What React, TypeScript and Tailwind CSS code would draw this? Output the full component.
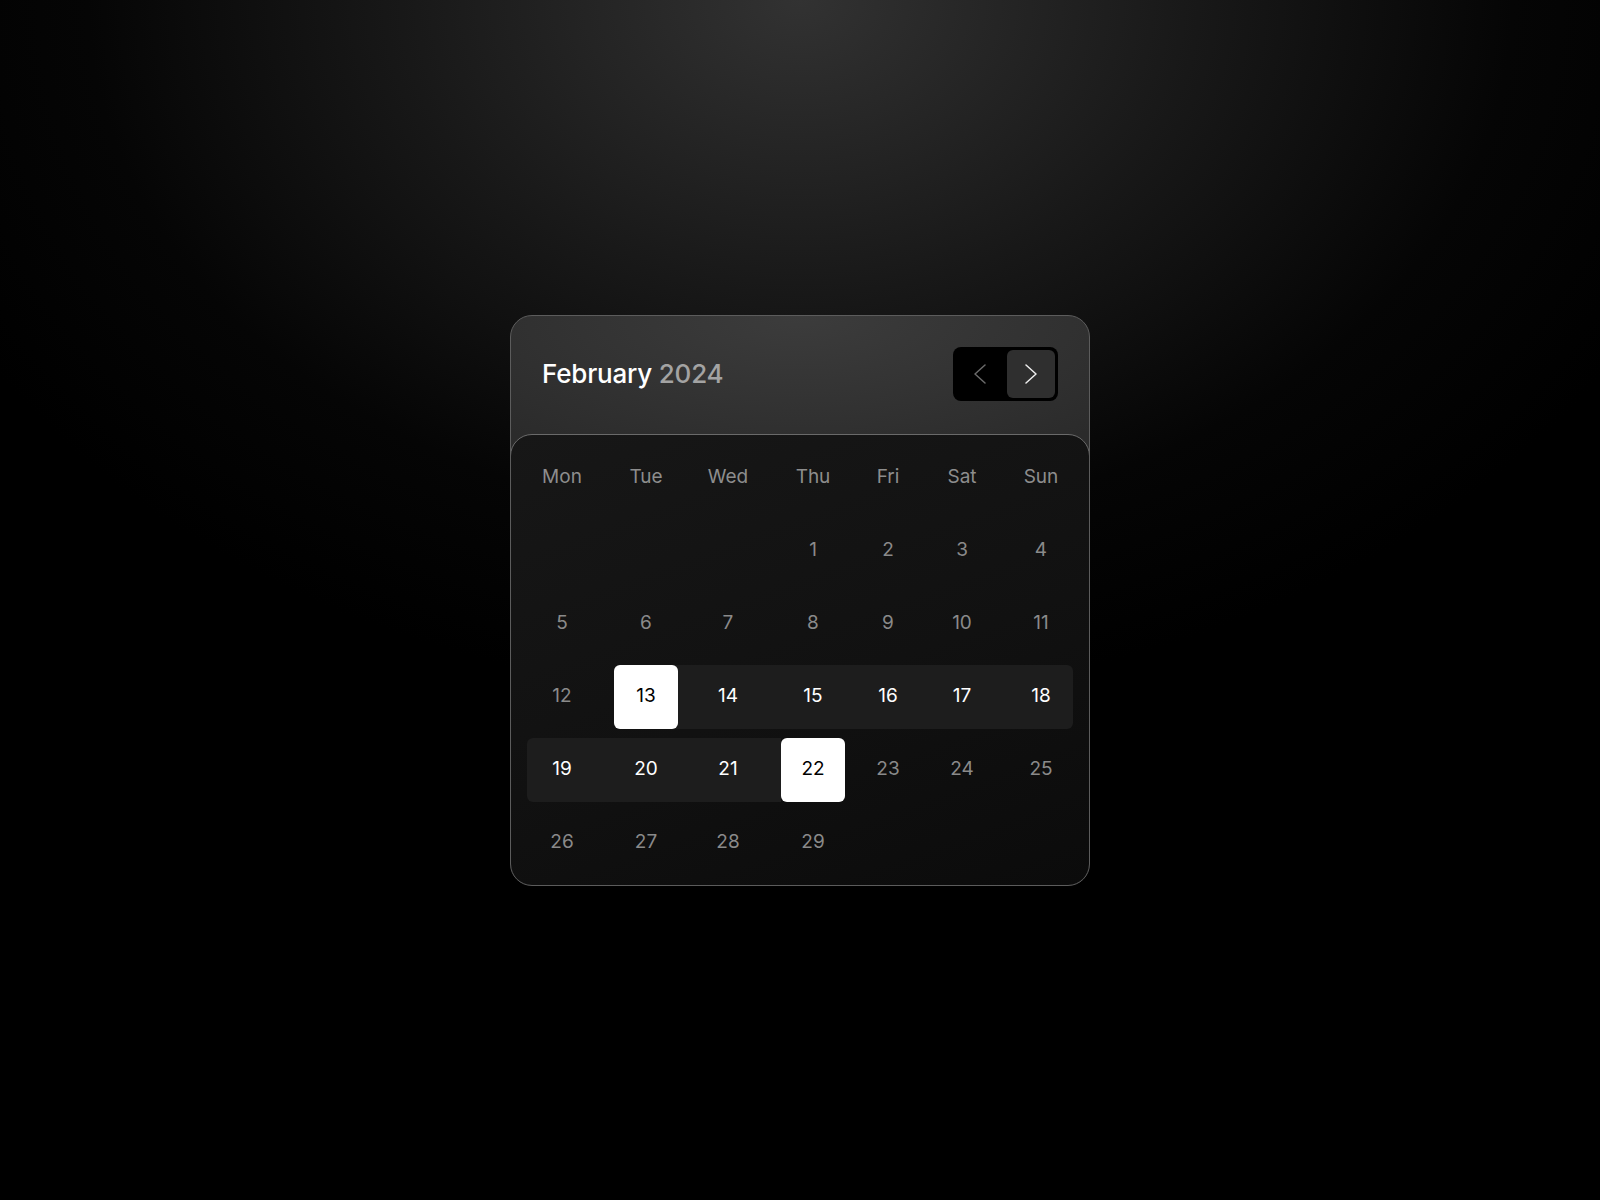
import { ReactNode } from "react";

const weekdays = ["Mon", "Tue", "Wed", "Thu", "Fri", "Sat", "Sun"];

// Feb 2024 starts on a Thursday
const days: (number | null)[] = [null, null, null, ...Array.from({ length: 29 }, (_, i) => i + 1)];

const rangeStart = 13;
const rangeEnd = 22;

function Chevron({ dir, className }: { dir: "left" | "right"; className?: string }) {
  return (
    <svg width="12" height="20" viewBox="0 0 12 20" fill="none" className={className}>
      <polyline
        points={dir === "left" ? "11,1 1,10 11,19" : "1,1 11,10 1,19"}
        stroke="currentColor"
        strokeWidth="1.5"
        strokeLinecap="round"
        strokeLinejoin="round"
      />
    </svg>
  );
}

function Cell({ col, children, bg }: { col: number; children: ReactNode; bg?: string }) {
  return (
    <div className={`flex h-16 items-center ${bg ?? ""}`}>
      <div className={`flex h-16 w-16 items-center justify-center ${col === 0 ? "ml-[3px]" : ""}`}>
        {children}
      </div>
    </div>
  );
}

export default function App() {
  return (
    <div
      className="flex min-h-screen items-center justify-center bg-[radial-gradient(ellipse_950px_700px_at_50%_0%,#323232_0%,#181818_42%,#050505_75%,#000_100%)]"
      style={{ fontFamily: "Inter, 'Noto Sans', sans-serif" }}
    >
      <div className="w-[580px] overflow-hidden rounded-[22px] border border-[#5c5c5c] bg-[radial-gradient(ellipse_420px_160px_at_50%_0%,#3c3c3c_0%,#2b2b2b_100%)]">
        <div className="flex items-center justify-between pt-[31px] pr-[31px] pb-[33px] pl-[31px]">
          <h1 className="text-[26px] font-medium tracking-[-0.2px] text-white">
            February <span className="text-[#a3a3a3]">2024</span>
          </h1>
          <div className="flex gap-[3px] rounded-[8px] bg-black p-[3px]">
            <button className="flex h-12 w-12 items-center justify-center rounded-[6px] text-[#6a6a6a]">
              <Chevron dir="left" />
            </button>
            <button className="flex h-12 w-12 items-center justify-center rounded-[6px] bg-[#2f2f2f] text-[#ececec]">
              <Chevron dir="right" />
            </button>
          </div>
        </div>

        <div className="-mx-px -mb-px rounded-[22px] border border-[#6a6a6a] bg-[linear-gradient(160deg,#171717_0%,#111111_55%,#0b0b0b_100%)] px-4 pt-[11px] pb-[10px]">
          <div className="grid grid-cols-[87px_82px_85px_75px_74px_79px_64px] gap-y-[9px] text-[19px]">
            {weekdays.map((w, i) => (
              <Cell key={w} col={i}>
                <span className="text-[#8d8d8d]">{w}</span>
              </Cell>
            ))}

            {days.map((d, i) => {
              const col = i % 7;
              if (d === null) return <Cell key={`e${i}`} col={col}>{null}</Cell>;

              const selected = d === rangeStart || d === rangeEnd;
              const inRange = d > rangeStart && d < rangeEnd;

              let bg = "";
              if (inRange) {
                bg = "bg-[#1d1d1d]";
                if (col === 0) bg += " rounded-l-[6px]";
                if (col === 6) bg += " rounded-r-[6px]";
              } else if (d === rangeStart) {
                bg = "bg-[linear-gradient(to_right,transparent_50%,#1d1d1d_50%)]";
              }

              return (
                <Cell key={d} col={col} bg={bg}>
                  {selected ? (
                    <div className="flex h-16 w-16 items-center justify-center rounded-[6px] bg-white text-black">
                      {d}
                    </div>
                  ) : (
                    <span className={inRange ? "text-white" : "text-[#8a8a8a]"}>{d}</span>
                  )}
                </Cell>
              );
            })}
          </div>
        </div>
      </div>
    </div>
  );
}
